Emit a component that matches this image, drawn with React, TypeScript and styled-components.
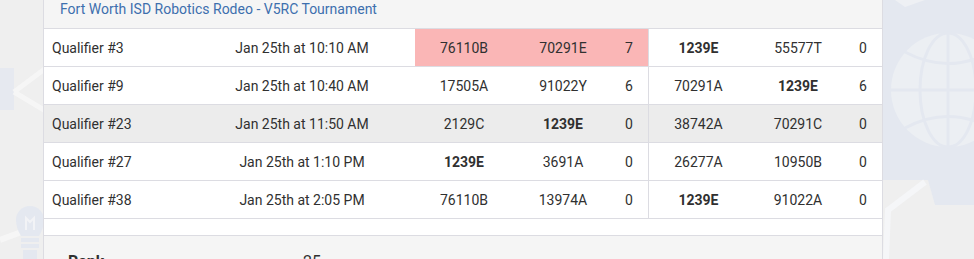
import React from 'react';
import styled, { createGlobalStyle } from 'styled-components';

const GlobalStyle = createGlobalStyle`
  html, body {
    margin: 0;
    padding: 0;
    background: #efefef;
    font-family: Roboto, "Liberation Sans", Arial, sans-serif;
    overflow: hidden;
  }
`;

const Page = styled.div`
  position: relative;
  width: 974px;
  height: 259px;
  overflow: hidden;
  background: #efefef;
`;

const Backdrop = styled.svg`
  position: absolute;
  left: 0;
  top: 0;
  width: 974px;
  height: 259px;
`;

const Card = styled.div`
  position: relative;
  margin-left: 43px;
  width: 838px;
  background: #fff;
  border-left: 1px solid #dcdce2;
  border-right: 1px solid #dcdce2;
  color: #303030;
  font-size: 14px;
`;

const CardHeader = styled.div`
  height: 29px;
  background: #f5f5f5;
  border-bottom: 1px solid #dcdce2;
  padding-left: 16px;
  box-sizing: border-box;
`;

const EventLink = styled.a`
  display: block;
  color: #3d6fae;
  font-size: 14px;
  line-height: 18px;
  text-decoration: none;
`;

const Row = styled.div<{ $shaded?: boolean }>`
  display: flex;
  height: 38px;
  box-sizing: border-box;
  background: ${(p) => (p.$shaded ? '#ececec' : '#fff')};
  border-bottom: 1px solid #dcdce2;
`;

const Cell = styled.div<{ $w: number; $pr?: number; $left?: boolean }>`
  flex: 0 0 ${(p) => p.$w}px;
  display: flex;
  align-items: center;
  justify-content: ${(p) => (p.$left ? 'flex-start' : 'center')};
  box-sizing: border-box;
  padding: 0 ${(p) => p.$pr ?? 0}px 0 ${(p) => (p.$left ? 8 : 0)}px;
  white-space: nowrap;
`;

const Alliance = styled.div<{ $hl?: boolean; $divider?: boolean }>`
  display: flex;
  flex: 0 0 ${(p) => (p.$divider ? 234 : 233)}px;
  box-sizing: border-box;
  background: ${(p) => (p.$hl ? '#fab6b6' : 'transparent')};
  border-left: ${(p) => (p.$divider ? '1px solid #dcdce2' : 'none')};
`;

const TeamNum = styled.span<{ $me?: boolean }>`
  font-weight: ${(p) => (p.$me ? 700 : 400)};
`;

const Spacer = styled.div`
  height: 17px;
  box-sizing: border-box;
  border-bottom: 1px solid #dcdce2;
`;

const Stats = styled.div`
  background: #f5f5f5;
  height: 60px;
  display: grid;
  grid-template-columns: 235px 1fr;
  padding: 16px 0 0 24px;
  font-size: 16px;
`;

const StatLabel = styled.span`
  font-weight: 700;
`;

type Team = { id: string; me?: boolean };
type Match = {
  name: string;
  time: string;
  red: [Team, Team];
  redScore: number;
  blue: [Team, Team];
  blueScore: number;
  shaded?: boolean;
  redWon?: boolean;
};

const matches: Match[] = [
  {
    name: 'Qualifier #3',
    time: 'Jan 25th at 10:10 AM',
    red: [{ id: '76110B' }, { id: '70291E' }],
    redScore: 7,
    blue: [{ id: '1239E', me: true }, { id: '55577T' }],
    blueScore: 0,
    redWon: true,
  },
  {
    name: 'Qualifier #9',
    time: 'Jan 25th at 10:40 AM',
    red: [{ id: '17505A' }, { id: '91022Y' }],
    redScore: 6,
    blue: [{ id: '70291A' }, { id: '1239E', me: true }],
    blueScore: 6,
  },
  {
    name: 'Qualifier #23',
    time: 'Jan 25th at 11:50 AM',
    red: [{ id: '2129C' }, { id: '1239E', me: true }],
    redScore: 0,
    blue: [{ id: '38742A' }, { id: '70291C' }],
    blueScore: 0,
    shaded: true,
  },
  {
    name: 'Qualifier #27',
    time: 'Jan 25th at 1:10 PM',
    red: [{ id: '1239E', me: true }, { id: '3691A' }],
    redScore: 0,
    blue: [{ id: '26277A' }, { id: '10950B' }],
    blueScore: 0,
  },
  {
    name: 'Qualifier #38',
    time: 'Jan 25th at 2:05 PM',
    red: [{ id: '76110B' }, { id: '13974A' }],
    redScore: 0,
    blue: [{ id: '1239E', me: true }, { id: '91022A' }],
    blueScore: 0,
  },
];

const Background = () => (
  <Backdrop viewBox="0 0 974 259">
    {/* left side decor */}
    <rect x="-10" y="68" width="24" height="42" fill="#e6e9f0" />
    <path d="M14 92 L46 68 M14 92 L44 110" stroke="#f6f6f6" strokeWidth="5" fill="none" />
    <path d="M0 240 L43 224" stroke="#f6f6f6" strokeWidth="6" fill="none" />
    <g fill="#e4e8f0">
      <path d="M16 220 a14 14 0 1 1 28 0 Q44 228 39 236 H21 Q16 228 16 220 Z" />
      <rect x="21" y="238" width="18" height="4" />
      <rect x="21" y="244" width="18" height="4" />
      <rect x="23" y="250" width="14" height="9" />
    </g>
    <path d="M26 230 v-12 l4 4 l4 -4 v12" stroke="#f2f3f6" strokeWidth="2" fill="none" />
    {/* right side decor */}
    <path d="M883 0 H974 V205 H926 L928 180 H883 Z" fill="#e4e8f0" />
    <path d="M895 0 L905 7 L925 0 Z" fill="#eef0f4" />
    <circle cx="948" cy="90" r="57" fill="#eceff3" />
    <g stroke="#e4e8f0" strokeWidth="3" fill="none">
      <line x1="891" y1="90" x2="1005" y2="90" />
      <line x1="948" y1="33" x2="948" y2="147" />
      <ellipse cx="948" cy="90" rx="28" ry="57" />
      <path d="M905 52 Q948 75 991 52" />
      <path d="M905 128 Q948 105 991 128" />
    </g>
    <path d="M883 205 L928 180 L935 205 Z" fill="#efefef" />
    <path d="M886 259 L888 210 L925 182" stroke="#f5f6f8" strokeWidth="6" fill="none" />
  </Backdrop>
);

export default function App() {
  return (
    <Page>
      <GlobalStyle />
      <Background />
      <Card>
        <CardHeader>
          <EventLink href="#">Fort Worth ISD Robotics Rodeo - V5RC Tournament</EventLink>
        </CardHeader>
        {matches.map((m) => (
          <Row key={m.name} $shaded={m.shaded}>
            <Cell $w={145} $left>{m.name}</Cell>
            <Cell $w={226}>{m.time}</Cell>
            <Alliance $hl={m.redWon}>
              <Cell $w={98}><TeamNum $me={m.red[0].me}>{m.red[0].id}</TeamNum></Cell>
              <Cell $w={100}><TeamNum $me={m.red[1].me}>{m.red[1].id}</TeamNum></Cell>
              <Cell $w={35} $pr={3}>{m.redScore}</Cell>
            </Alliance>
            <Alliance $divider>
              <Cell $w={99}><TeamNum $me={m.blue[0].me}>{m.blue[0].id}</TeamNum></Cell>
              <Cell $w={100}><TeamNum $me={m.blue[1].me}>{m.blue[1].id}</TeamNum></Cell>
              <Cell $w={34} $pr={4}>{m.blueScore}</Cell>
            </Alliance>
          </Row>
        ))}
        <Spacer />
        <Stats>
          <StatLabel>Rank</StatLabel>
          <span>25</span>
        </Stats>
      </Card>
    </Page>
  );
}
